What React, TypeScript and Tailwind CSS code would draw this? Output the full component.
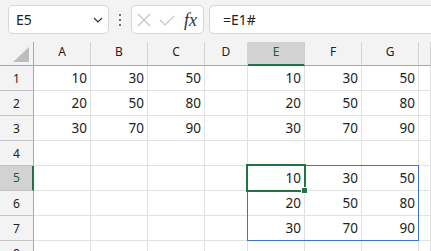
import React from "react";

const cols = ["A", "B", "C", "D", "E", "F", "G", ""];
const data: Record<number, (number | null)[]> = {
  1: [10, 30, 50, null, 10, 30, 50, null],
  2: [20, 50, 80, null, 20, 50, 80, null],
  3: [30, 70, 90, null, 30, 70, 90, null],
  4: [null, null, null, null, null, null, null, null],
  5: [null, null, null, null, 10, 30, 50, null],
  6: [null, null, null, null, 20, 50, 80, null],
  7: [null, null, null, null, 30, 70, 90, null],
  8: [null, null, null, null, null, null, null, null],
};

function Toolbar() {
  return (
    <div className="flex h-[42px] items-start bg-[#f3f3f3] pl-[8px] pt-[5px]">
      <div className="flex h-[29px] w-[101px] items-center justify-between rounded-[5px] border border-[#d6d6d6] bg-white pl-[7px] pr-[5px]">
        <span className="text-[14px] text-[#222]">E5</span>
        <svg width="10" height="6" viewBox="0 0 10 6">
          <polyline points="1,1 5,5 9,1" fill="none" stroke="#333" strokeWidth="1.2" />
        </svg>
      </div>
      <div className="flex h-[29px] w-[22px] flex-col items-center justify-center gap-[3px]">
        <span className="size-[2px] rounded-full bg-[#444]" />
        <span className="size-[2px] rounded-full bg-[#444]" />
        <span className="size-[2px] rounded-full bg-[#444]" />
      </div>
      <div className="flex h-[29px] w-[73px] items-center rounded-[5px] border border-[#d6d6d6] bg-white pl-[4px]">
        <svg width="14" height="14" viewBox="0 0 14 14" className="ml-[1px]">
          <line x1="1" y1="1" x2="13" y2="13" stroke="#c4c4c4" strokeWidth="1.1" />
          <line x1="13" y1="1" x2="1" y2="13" stroke="#c4c4c4" strokeWidth="1.1" />
        </svg>
        <svg width="16" height="12" viewBox="0 0 16 12" className="ml-[8px]">
          <polyline points="1,6 6,11 15,2" fill="none" stroke="#c4c4c4" strokeWidth="1.1" />
        </svg>
        <span className="ml-[9px] font-['Liberation_Serif',serif] text-[18px] italic leading-none text-[#333]">
          fx
        </span>
      </div>
      <div className="ml-[5px] flex h-[29px] flex-1 items-center rounded-l-[5px] border border-r-0 border-[#d6d6d6] bg-white pl-[13px]">
        <span className="text-[14px] text-[#222]">=E1#</span>
      </div>
    </div>
  );
}

function Sheet() {
  return (
    <div className="relative">
      <div className="grid grid-cols-[34px_57px_57px_57px_43px_57px_57px_57px_1fr] grid-rows-[24px_repeat(8,25px)]">
        <div className="relative border-r border-b border-[#a8a8a8] bg-[#f3f3f3]">
          <svg width="17" height="16" viewBox="0 0 17 16" className="absolute right-[3px] bottom-[2px]">
            <polygon points="16,0 16,15 0,15" fill="#bdbdbd" />
          </svg>
        </div>
        {cols.map((c, i) =>
          c === "E" ? (
            <div
              key={i}
              className="flex items-start justify-center border-r border-b-2 border-r-[#d0d0d0] border-b-[#217346] bg-[#d2d2d2] pt-[1px] text-[12px] text-[#1b5e38]"
            >
              {c}
            </div>
          ) : (
            <div
              key={i}
              className="flex items-start justify-center border-r border-b border-r-[#d4d4d4] border-b-[#a8a8a8] bg-[#f3f3f3] pt-[1px] text-[12px] text-[#222]"
            >
              {c}
            </div>
          )
        )}
        {Object.keys(data).map((k) => {
          const r = Number(k);
          return (
            <React.Fragment key={r}>
              {r === 5 ? (
                <div className="flex items-center justify-center border-r-2 border-b border-r-[#217346] border-b-[#c4c4c4] bg-[#d2d2d2] pl-[1px] text-[12px] text-[#1b5e38]">
                  {r}
                </div>
              ) : (
                <div className="flex items-center justify-center border-r border-b border-r-[#a8a8a8] border-b-[#c4c4c4] bg-[#f3f3f3] pt-[1px] text-[12px] text-[#222]">
                  {r}
                </div>
              )}
              {data[r].map((v, j) => (
                <div
                  key={j}
                  className="flex items-center justify-end border-r border-b border-[#e1e1e1] bg-white pr-[3px] pt-[1px] text-[13.5px] text-[#222]"
                >
                  {v}
                </div>
              ))}
            </React.Fragment>
          );
        })}
      </div>
      <div className="pointer-events-none absolute left-[247px] top-[123px] h-[76px] w-[172px] border border-[#3a72cf]" />
      <div className="pointer-events-none absolute left-[246px] top-[122px] h-[28px] w-[60px] border-2 border-[#217346]" />
      <div className="pointer-events-none absolute left-[301px] top-[145px] size-[7px] border border-white bg-[#217346]" />
    </div>
  );
}

export default function App() {
  return (
    <div className="h-[251px] w-[431px] overflow-hidden bg-white font-['Noto_Sans',sans-serif]">
      <Toolbar />
      <Sheet />
    </div>
  );
}
